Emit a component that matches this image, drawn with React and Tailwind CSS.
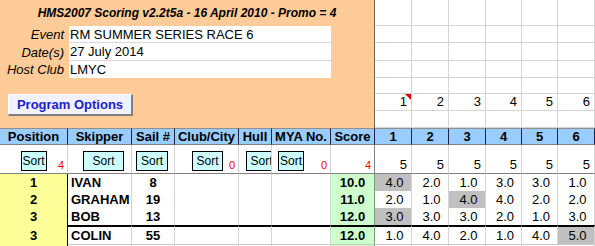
import React from 'react';

const COLS =
  'grid grid-cols-[68px_64px_43px_64px_33px_59px_44px_37px_37px_37px_36px_36px_37px]';

const HEADERS = ['Position', 'Skipper', 'Sail #', 'Club/City', 'Hull', 'MYA No.', 'Score', '1', '2', '3', '4', '5', '6'];

const ROWS = [
  { pos: '1', name: 'IVAN', sail: '8', score: '10.0', r: ['4.0', '2.0', '1.0', '3.0', '3.0', '1.0'], drop: 0 },
  { pos: '2', name: 'GRAHAM', sail: '19', score: '11.0', r: ['2.0', '1.0', '4.0', '4.0', '2.0', '2.0'], drop: 2 },
  { pos: '3', name: 'BOB', sail: '13', score: '12.0', r: ['3.0', '3.0', '3.0', '2.0', '1.0', '3.0'], drop: 0 },
  { pos: '3', name: 'COLIN', sail: '55', score: '12.0', r: ['1.0', '4.0', '2.0', '1.0', '4.0', '5.0'], drop: 5, split: true },
];

const TOP_ROWS = ['h-[26px]', 'h-[17px]', 'h-[18px]', 'h-[17px]', 'h-[16px]', 'h-[17px]', 'h-[17px]'];
const TOP_COLS = ['w-[37px]', 'w-[37px]', 'w-[37px]', 'w-[36px]', 'w-[36px]', 'w-[37px]'];

function SortBtn({ className }) {
  return (
    <div className={`h-[20px] shrink-0 border border-black bg-[#CCFFFF] text-[12px] leading-none flex items-center justify-center ${className}`}>
      Sort
    </div>
  );
}

function Red({ children }) {
  return (
    <span className="absolute right-[3px] bottom-[2px] text-[11px] leading-none text-[#ff0000]">{children}</span>
  );
}

function InfoRow({ label, value, h, last }) {
  return (
    <div className={`flex ${h}`}>
      <div className="w-[64px] text-right italic text-[13px] leading-none flex items-center justify-end">{label}</div>
      <div className={`ml-[5px] w-[262px] bg-white text-[13px] leading-none flex items-center pl-[1px] ${last ? '' : 'border-b border-[#d8d8d8]'}`}>
        {value}
      </div>
    </div>
  );
}

export default function App() {
  return (
    <div className="w-[595px] h-[246px] overflow-hidden bg-white text-black font-['Liberation_Sans',Arial,sans-serif]">
      {/* Top: title panel + empty sheet grid */}
      <div className="flex h-[128px]">
        <div className="w-[375px] bg-[#FFCC99] border-r border-[#7a6550] flex flex-col">
          <div className="h-[26px] flex items-center justify-center text-[12px] font-bold italic">
            HMS2007 Scoring v2.2t5a - 16 April 2010 - Promo = 4
          </div>
          <InfoRow label="Event" value="RM SUMMER SERIES RACE 6" h="h-[17px]" />
          <InfoRow label="Date(s)" value="27 July 2014" h="h-[18px]" />
          <InfoRow label="Host Club" value="LMYC" h="h-[17px]" last />
          <div className="mt-[16px] ml-[8px] w-[125px] h-[22px] bg-[#F2F2FF] border border-t-white border-l-white border-r-[#808080] border-b-[#808080] border-r-2 border-b-2 flex items-center justify-center text-[13px] font-bold text-[#1c1cc8]">
            Program Options
          </div>
        </div>
        <div className="flex flex-col">
          {TOP_ROWS.map((h, ri) => (
            <div key={ri} className={`flex ${h}`}>
              {TOP_COLS.map((w, ci) => (
                <div
                  key={ci}
                  className={`relative ${w} border-r border-b border-[#d4d4d4] flex items-center justify-end pr-[4px] text-[13px]`}
                >
                  {ri === 5 && String(ci + 1)}
                  {ri === 5 && ci === 0 && (
                    <svg className="absolute right-0 top-0" width="6" height="6" viewBox="0 0 6 6">
                      <polygon points="0,0 6,0 6,6" fill="#e00000" />
                    </svg>
                  )}
                </div>
              ))}
            </div>
          ))}
        </div>
      </div>

      {/* Header row */}
      <div className={COLS}>
        {HEADERS.map((h, i) => (
          <div
            key={i}
            className="h-[17px] bg-[#99CCFF] border-t border-t-[#909090] border-b border-b-[#808080] border-r border-r-[#202040] flex items-center justify-center text-[13px] font-bold leading-none"
          >
            {h}
          </div>
        ))}
      </div>

      {/* Sort row */}
      <div className={COLS}>
        <div className="relative h-[29px] border-r border-b border-r-[#d4d4d4] border-b-[#808080] flex justify-center pt-[6px]">
          <SortBtn className="w-[26px]" />
          <Red>4</Red>
        </div>
        <div className="h-[29px] border-r border-b border-r-[#d4d4d4] border-b-[#808080] flex pl-[15px] pt-[6px]">
          <SortBtn className="w-[41px]" />
        </div>
        <div className="h-[29px] border-r border-b border-r-[#d4d4d4] border-b-[#808080] flex pl-[4px] pt-[6px]">
          <SortBtn className="w-[32px]" />
        </div>
        <div className="relative h-[29px] border-r border-b border-r-[#d4d4d4] border-b-[#808080] flex pl-[17px] pt-[6px]">
          <SortBtn className="w-[31px]" />
          <Red>0</Red>
        </div>
        <div className="h-[29px] overflow-hidden border-r border-b border-r-[#d4d4d4] border-b-[#808080] flex pl-[7px] pt-[6px]">
          <SortBtn className="w-[31px]" />
        </div>
        <div className="relative h-[29px] border-r border-b border-r-[#d4d4d4] border-b-[#808080] flex pl-[6px] pt-[6px]">
          <SortBtn className="w-[26px]" />
          <Red>0</Red>
        </div>
        <div className="relative h-[29px] border-r border-b border-r-[#808080] border-b-[#808080]">
          <Red>4</Red>
        </div>
        {[0, 1, 2, 3, 4, 5].map(i => (
          <div
            key={i}
            className="h-[29px] border-r border-b border-r-[#d4d4d4] border-b-[#808080] flex items-end justify-end pr-[4px] pb-[1px] text-[13px] leading-[15px]"
          >
            5
          </div>
        ))}
      </div>

      {/* Results */}
      {ROWS.map((row, ri) => {
        const top = row.split ? 'h-[19px] border-t-2 border-t-black' : 'h-[17px]';
        return (
          <div key={ri} className={COLS}>
            <div className={`${row.split ? 'h-[19px] pt-[2px]' : 'h-[17px]'} bg-[#FFFF99] border-r border-r-black flex items-center justify-center text-[13px] font-bold leading-none`}>
              {row.pos}
            </div>
            <div className={`${top} border-r border-r-[#d4d4d4] flex items-center pl-[3px] text-[13px] font-bold leading-none`}>
              {row.name}
            </div>
            <div className={`${top} border-r border-r-[#d4d4d4] flex items-center justify-center text-[13px] font-bold leading-none`}>
              {row.sail}
            </div>
            <div className={`${top} border-r border-r-[#d4d4d4]`} />
            <div className={`${top} border-r border-r-[#d4d4d4]`} />
            <div className={`${top} border-r border-r-[#d4d4d4]`} />
            <div className={`${top} bg-[#CCFFCC] border-r border-r-[#7a9a7a] flex items-center justify-center text-[13px] font-bold leading-none`}>
              {row.score}
            </div>
            {row.r.map((v, ci) => (
              <div
                key={ci}
                className={`${top} ${ci === row.drop ? 'bg-[#C0C0C0]' : ''} border-r border-r-[#d4d4d4] flex items-center justify-center pl-[3px] text-[13px] leading-none`}
              >
                {v}
              </div>
            ))}
          </div>
        );
      })}

      {/* next (empty) row */}
      <div className={COLS}>
        <div className="h-[17px] bg-[#FFFF99] border-r border-r-black" />
        {[0, 1, 2, 3, 4, 5, 6, 7, 8, 9, 10, 11].map(i => (
          <div
            key={i}
            className={`h-[17px] border-t border-t-[#c8c8c8] border-r ${i === 5 ? 'bg-[#CCFFCC] border-r-[#7a9a7a]' : 'border-r-[#d4d4d4]'}`}
          />
        ))}
      </div>
    </div>
  );
}
